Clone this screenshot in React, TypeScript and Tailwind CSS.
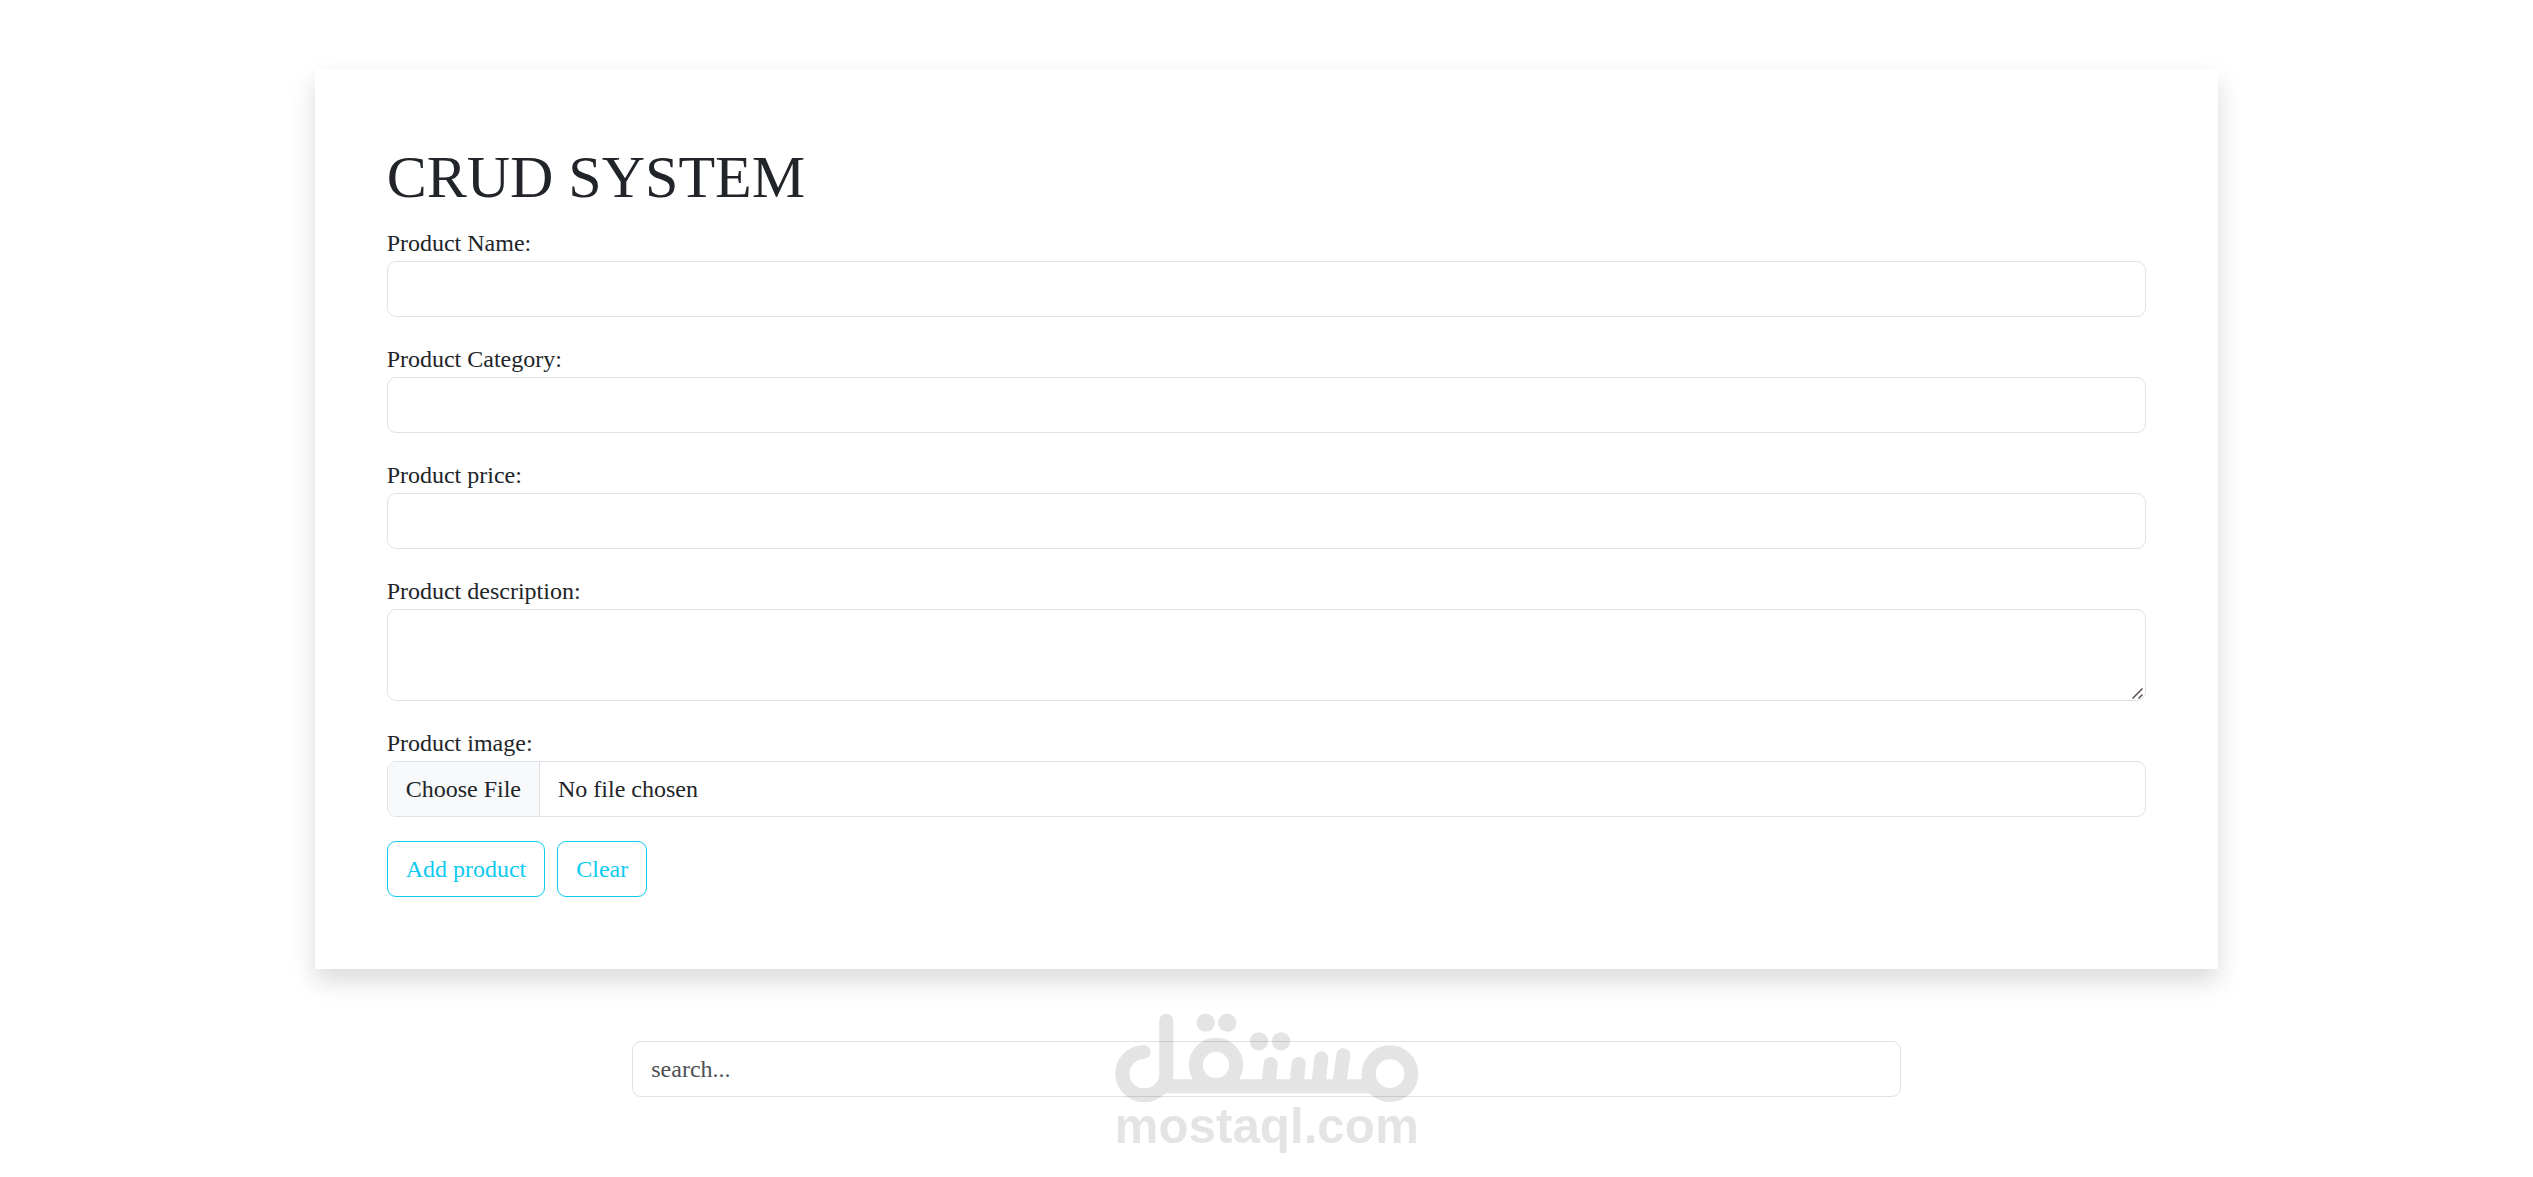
import { useRef, useState } from 'react';

const controlClass =
  "block w-full rounded-[9px] border border-[#dee2e6] bg-white px-[18px] py-[9px] text-2xl leading-9 text-[#212529] outline-none focus:border-[#86b7fe]";

const buttonClass =
  "rounded-[9px] border border-[#0dcaf0] px-[18px] py-[9px] text-2xl leading-9 text-[#0dcaf0] hover:bg-[#0dcaf0] hover:text-black";

const fields = [
  { id: "productName", label: "Product Name:" },
  { id: "productCategory", label: "Product Category:" },
  { id: "productPrice", label: "Product price:" },
];

const MostaqlLogo = () => (
  <svg
    viewBox="99 68 918 438"
    className="pointer-events-none absolute -top-7 left-1/2 w-[306px] -translate-x-1/2 overflow-visible"
    role="img"
    aria-label="mostaql.com"
  >
    <g opacity="0.1">
      <g fill="none" stroke="#000" strokeWidth="42" strokeLinecap="round">
        <path d="M256 91V250A66 65 0 1 1 188 185" />
        <path d="M250 287.5H870" />
        <circle cx="405" cy="224" r="60.5" />
        <path d="M569 221L562 287" />
        <path d="M653 221L646 287" />
        <path d="M721 204L712 287" />
        <path d="M787 195L774 287" />
        <circle cx="927" cy="250" r="64" />
        <path d="M863 250V287" />
      </g>
      <circle cx="374" cy="97" r="27.5" />
      <circle cx="439" cy="97" r="27.5" />
      <circle cx="534" cy="153" r="27.5" />
      <circle cx="600" cy="153" r="27.5" />
      <text x="557" y="458" textAnchor="middle" fontSize="148" fontWeight="700" fontFamily="'Liberation Sans', Arial, sans-serif">
        mostaql.com
      </text>
    </g>
  </svg>
);

export default function App() {
  const formRef = useRef<HTMLFormElement>(null);
  const [search, setSearch] = useState("");

  return (
    <div className="min-h-screen bg-white py-[69px] font-['Liberation_Serif','Times_New_Roman',serif] text-2xl leading-9 text-[#212529]">
      {/* Product form */}
      <form
        ref={formRef}
        onSubmit={(e) => e.preventDefault()}
        className="mx-auto w-[calc(75%+4px)] p-[72px] shadow-[0_12px_24px_rgba(0,0,0,0.15)]"
      >
        <h1 className="mb-3 text-6xl leading-[72px] font-medium">CRUD SYSTEM</h1>

        {fields.map((field) => (
          <div key={field.id} className="mb-6">
            <label htmlFor={field.id} className="block">{field.label}</label>
            <input id={field.id} type="text" className={controlClass} />
          </div>
        ))}

        <div className="mb-6">
          <label htmlFor="productDescription" className="block">Product description:</label>
          <div className="relative">
            <textarea
              id="productDescription"
              rows={2}
              className={`${controlClass} resize-y [&::-webkit-resizer]:bg-transparent`}
            />
            {/* Resize grip */}
            <svg
              viewBox="0 0 11 11"
              className="pointer-events-none absolute right-[3px] bottom-[2px] size-[11px]"
              fill="none"
              stroke="#5c4d52"
              strokeWidth="1.5"
              aria-hidden="true"
            >
              <path d="M0.5 10.5L10.5 0.5M6.5 10.5L10.5 6.5" />
            </svg>
          </div>
        </div>

        <div className="mb-6">
          <label htmlFor="productImage" className="block">Product image:</label>
          <input
            id="productImage"
            type="file"
            className="block w-full overflow-hidden rounded-[9px] border border-[#dee2e6] bg-white text-2xl leading-9 file:mr-[18px] file:border-0 file:border-r file:border-solid file:border-[#dee2e6] file:bg-[#f8f9fa] file:px-[18px] file:py-[9px] file:text-[#212529]"
          />
        </div>

        <div className="flex gap-3">
          <button type="submit" className={buttonClass}>Add product</button>
          <button type="button" className={buttonClass} onClick={() => formRef.current?.reset()}>Clear</button>
        </div>
      </form>

      {/* Search */}
      <div className="relative mx-auto mt-[72px] w-[calc(50%+2px)]">
        <input
          type="text"
          aria-label="Search products"
          placeholder="search..."
          value={search}
          onChange={(e) => setSearch(e.target.value)}
          className={`${controlClass} placeholder:text-[#4d5154]`}
        />
        <MostaqlLogo />
      </div>
    </div>
  );
}
